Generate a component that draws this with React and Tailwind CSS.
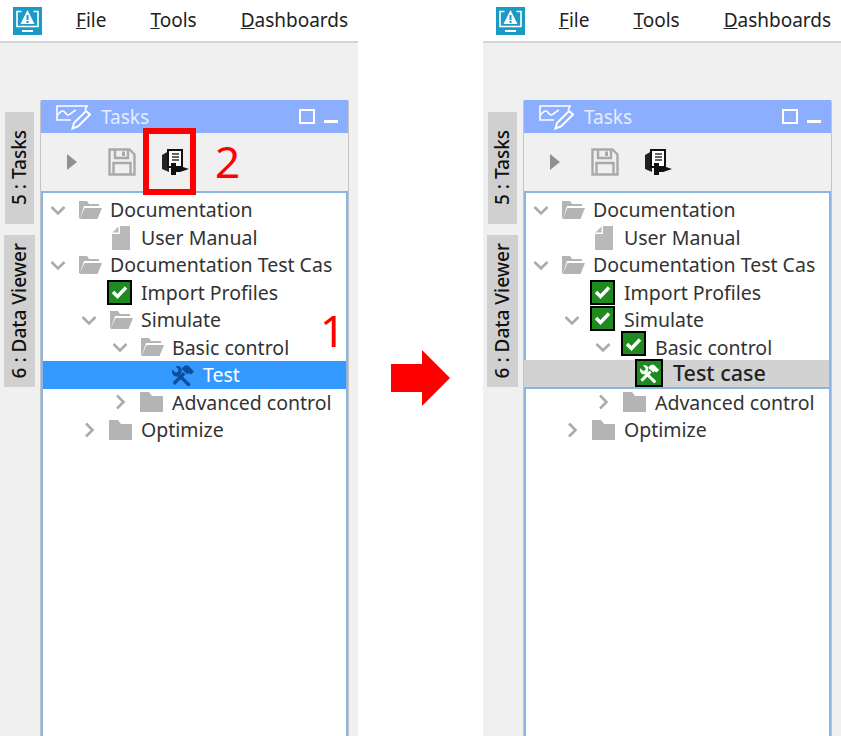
const FONT = "font-['Noto_Sans','Open_Sans',sans-serif]";

const Chevron = ({ open }) => (
  <svg width="16" height="16" viewBox="0 0 16 16" fill="none" stroke="#ababab" strokeWidth="2.6">
    {open ? <path d="M1.5 5l6.5 6.5L14.500 5" /> : <path d="M5 1.500l6.500 6.500L5 14.500" />}
  </svg>
);

const FolderOpen = () => (
  <svg width="26" height="22" viewBox="0 0 26 22" fill="#b4b4b4">
    <path d="M2 2h8l2 3h10v2H7L3 19H2z" />
    <path d="M7.500 9H25l-4.500 11H2.500z" />
  </svg>
);

const Folder = () => (
  <svg width="26" height="22" viewBox="0 0 26 22" fill="#b4b4b4">
    <path d="M1 1h9l3 4h11v16H1z" />
  </svg>
);

const Doc = () => (
  <svg width="26" height="25" viewBox="0 0 26 25" fill="#b9b9b9">
    <path d="M12 1h10v24H4V9h8z" />
    <path d="M10.500 1.500L4.500 7.500h6z" />
  </svg>
);

const Check = ({ lift }) => (
  <span className={`-ml-[2px] mr-[2px] flex h-[25px] w-[25px] shrink-0 items-center justify-center border-2 border-black bg-[#1f8a1f] ${lift || ''}`}>
    <svg width="17" height="14" viewBox="0 0 17 14" fill="none" stroke="#fff" strokeWidth="3.400">
      <path d="M2 7l4.500 4.500L15 2.500" />
    </svg>
  </span>
);

const Tools = ({ className }) => (
  <svg className={className} width="24" height="22" viewBox="0 0 24 22" fill="currentColor">
    {/* hammer, head up right */}
    <path d="M1.500 18.500L12 8l2.500 2.500L4 21z" />
    <path d="M10.500 4.500L14 1.500h3l6 6-3 3-2-1.500-1.500 1.500L12 6.500z" />
    {/* wrench, jaws up left */}
    <path d="M9.500 10.500L19 19.500a1.800 1.800 0 0 1-2.500 2.500L7 12.500C4.500 13.200 1 11.500 1 7.500c0-.8.200-1.500.4-2l3.100 3 2.500-.5.500-2.500-3-3c.6-.3 1.300-.5 2-.5 4 0 5.500 4 3 8.500z" />
  </svg>
);

const Logo = () => (
  <svg width="29" height="28" viewBox="0 0 29 28">
    <rect width="29" height="28" fill="#1c9ac6" />
    <path d="M8.500 4.500H4v15h21v-15h-4.500" fill="none" stroke="#fff" strokeWidth="1.600" />
    <path d="M14.500 3l7 14h-14z" fill="#fff" />
    <path d="M13.500 8h2v5h-2zM13.500 14h2v2h-2z" fill="#1c9ac6" />
    <path d="M9 24h11" stroke="#fff" strokeWidth="2" />
  </svg>
);

const ChartPen = () => (
  <svg width="35" height="26" viewBox="0 0 35 26" fill="none" stroke="#fff" strokeWidth="1.600">
    <path d="M29 6l2-4H1v14h14" />
    <path d="M1 12c2-3 4-5 6-5s3 4 5 4 5-4 8-5" />
    <path d="M30 7l4 3.500-12 12-5.500 2 1.500-5.500z" strokeWidth="2" />
  </svg>
);

const Save = () => (
  <svg width="28" height="28" viewBox="0 0 28 28" fill="none" stroke="#a9a9a9" strokeWidth="2.400">
    <path d="M1.500 1.500h20l5 5v20h-25z" />
    <path d="M7 2v8h13V2M5.500 26v-11h17v11" />
    <path d="M15.500 3.500v4.500" strokeWidth="3" />
  </svg>
);

const RunDoc = () => (
  <svg width="28" height="27" viewBox="0 0 28 27">
    <path d="M1 6l7-4v21l-7-3z" fill="#222" />
    <path d="M7 1h14v17H7z" fill="#fff" stroke="#111" strokeWidth="2" />
    <path d="M11 5h7M11 8h7M11 11h7" stroke="#333" strokeWidth="1.300" />
    <path d="M10 14h5v3h4l9 3-9 3h-4v3h-5z" fill="#111" />
  </svg>
);

const TREE = [
  { label: 'Documentation', level: 0, icon: 'open', chevron: 'open' },
  { label: 'User Manual', level: 1, icon: 'doc' },
  { label: 'Documentation Test Cas', level: 0, icon: 'open', chevron: 'open' },
  { label: 'Import Profiles', level: 1, icon: 'check' },
  { label: 'Simulate', level: 1, icon: 'open', chevron: 'open', done: 'mb-[3px]' },
  { label: 'Basic control', level: 2, icon: 'open', chevron: 'open', done: 'mb-[7px]' },
  { label: 'Test', doneLabel: 'Test case', level: 3, icon: 'tools', selected: true },
  { label: 'Advanced control', level: 2, icon: 'folder', chevron: 'closed' },
  { label: 'Optimize', level: 1, icon: 'folder', chevron: 'closed' },
];

const levelPad = ['pl-[5px]', 'pl-[36px]', 'pl-[67px]', 'pl-[98px]'];

const TreeRow = ({ row, after }) => {
  const isSel = row.selected;

  let icon = null;
  if (row.icon === 'check') icon = <Check />;
  else if (after && row.done) icon = <Check lift={row.done} />;
  else if (row.icon === 'open') icon = <FolderOpen />;
  else if (row.icon === 'folder') icon = <Folder />;
  else if (row.icon === 'doc') icon = <Doc />;

  if (isSel && after) {
    return (
      <div className="-mt-[1.500px] -ml-[2px] flex h-[29px] items-center border-b-2 border-[#8ab6e6] bg-[#d2d2d2] pl-[111px]">
        <span className="flex h-[28px] w-[28px] shrink-0 items-center justify-center border-2 border-black bg-[#1f8a1f]">
          <Tools className="h-[20px] w-[21px] text-white" />
        </span>
        <span className="ml-[10px] whitespace-nowrap text-[21.500px] font-medium text-[#222]">{row.doneLabel}</span>
      </div>
    );
  }

  return (
    <div className={`flex h-[27.500px] items-center ${levelPad[row.level]} ${isSel ? 'bg-[#3399ff]' : ''}`}>
      <span className="flex w-[20px] shrink-0 items-center justify-center">
        {row.chevron && <Chevron open={row.chevron === 'open'} />}
      </span>
      <span className="ml-[9px] flex w-[26px] shrink-0 items-center justify-center">
        {isSel ? <Tools className="text-[#0b4f9e]" /> : icon}
      </span>
      <span className={`ml-[7px] whitespace-nowrap text-[19.500px] ${isSel ? 'text-white' : 'text-[#333]'}`}>
        {row.label}
      </span>
    </div>
  );
};

const SideTab = ({ label, className }) => (
  <div className={`flex items-center justify-center bg-[#d0d0d0] ${className}`}>
    <span className="rotate-180 whitespace-nowrap text-[19px] font-medium text-[#111] [writing-mode:vertical-rl]">{label}</span>
  </div>
);

const AppWindow = ({ after }) => (
  <div className="relative flex h-[736px] w-[358px] shrink-0 flex-col overflow-hidden">
    {/* Menu bar */}
    <div className="flex h-[43px] shrink-0 items-center border-b-2 border-[#d4d4d4] bg-white pl-[13px]">
      <Logo />
      <div className="ml-[34px] flex gap-[44px] text-[19px] text-[#222]">
        <span><u>F</u>ile</span>
        <span><u>T</u>ools</span>
        <span><u>D</u>ashboards</span>
      </div>
    </div>

    <div className="flex flex-1 bg-[#f0f0f0] pt-[57px]">
      {/* Side tabs */}
      <div className="flex w-[40px] shrink-0 flex-col items-start gap-[11px] pl-[4px] pt-[12px]">
        <SideTab label="5 : Tasks" className="ml-[1px] h-[112px] w-[29px]" />
        <SideTab label="6 : Data Viewer" className="h-[152px] w-[31px]" />
      </div>

      {/* Tasks panel */}
      <div className="flex w-[309px] flex-col rounded-t-[2px] border-x border-[#c4c4c4]">
        <div className="flex h-[33px] shrink-0 items-center bg-[#8caeff] pl-[15px] pr-[10px]">
          <ChartPen />
          <span className="ml-[10px] mt-[2px] text-[19px] text-[#e6edff]">Tasks</span>
          <span className="ml-auto h-[15px] w-[16px] border-2 border-white" />
          <span className="ml-[9px] mt-[10px] h-[3px] w-[14px] bg-white" />
        </div>
        <div className="flex h-[58px] shrink-0 items-center pl-[26px]">
          <span className="h-0 w-0 border-y-[8px] border-l-[10px] border-y-transparent border-l-[#909090]" />
          <span className="ml-[31px] flex"><Save /></span>
          <span className="ml-[25px] flex"><RunDoc /></span>
        </div>
        <div className="flex-1 border-x-2 border-t-2 border-[#8ab6e6] bg-white pt-[3px]">
          {TREE.map((row) => (
            <TreeRow key={row.label} row={row} after={after} />
          ))}
        </div>
      </div>
    </div>

    {/* Callouts */}
    {!after && (
      <>
        <div className="absolute left-[143px] top-[128px] h-[67px] w-[53px] border-[6px] border-[#ff0000]" />
        <span className="absolute left-[215px] top-[131px] text-[44px] leading-[60px] text-[#ff0000]">2</span>
        <span className="absolute left-[320px] top-[300px] text-[44px] leading-[60px] text-[#ff0000]">1</span>
      </>
    )}
  </div>
);

export default function App() {
  return (
    <div className={`flex h-[736px] w-[841px] overflow-hidden bg-white ${FONT}`}>
      <AppWindow />
      <div className="w-[125px] shrink-0 pl-[33px] pt-[350px]">
        <svg width="59" height="56" viewBox="0 0 59 56">
          <path d="M0 14h31V0l28 28-28 28V42H0z" fill="#ff0000" />
        </svg>
      </div>
      <AppWindow after />
    </div>
  );
}
